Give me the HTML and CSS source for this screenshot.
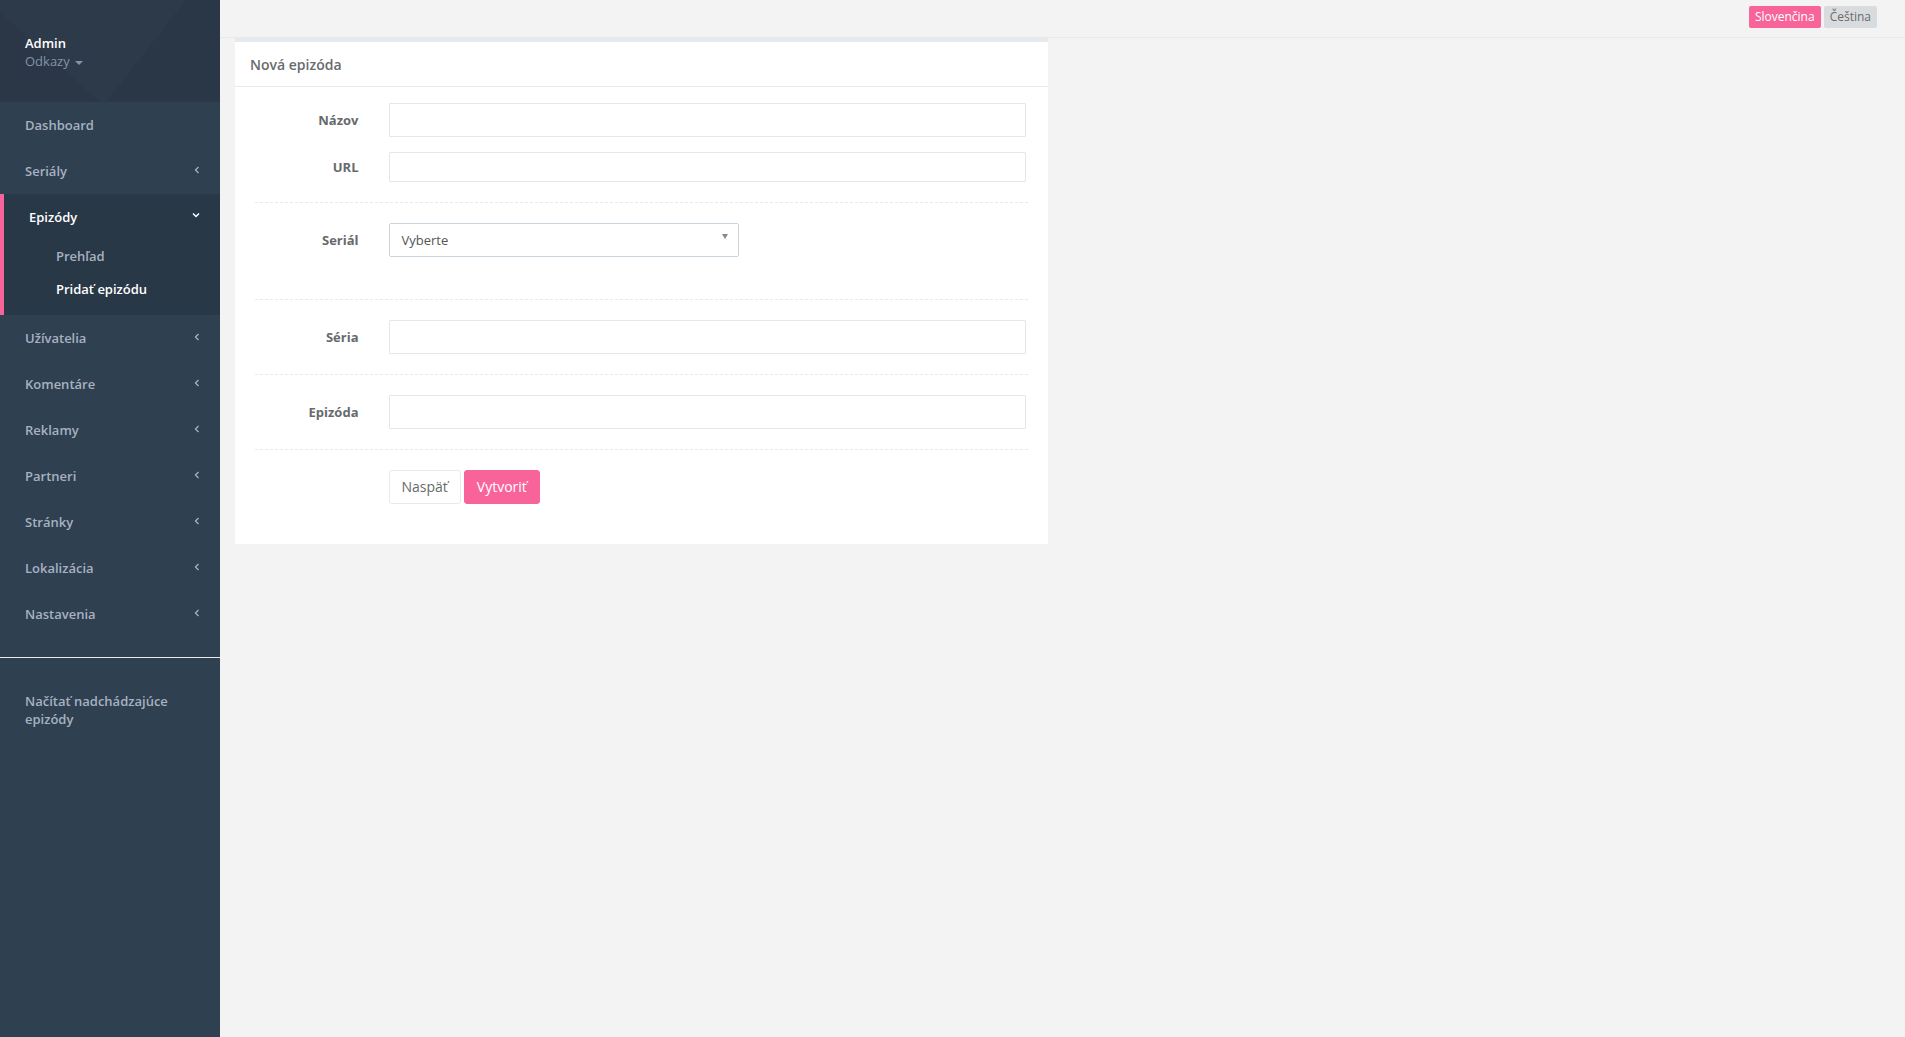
FILE: index.html
```html
<!DOCTYPE html>
<html lang="sk">
<head>
<meta charset="utf-8">
<title>Nová epizóda</title>
<link rel="stylesheet" href="styles.css">
</head>
<body>
<div class="layout">
  <nav class="sidebar">
    <div class="nav-header">
      <div class="profile-name">Admin</div>
      <div class="profile-links">Odkazy <span class="caret"></span></div>
    </div>
    <ul class="menu">
      <li><a class="menu-link">Dashboard</a></li>
      <li><a class="menu-link">Seriály <svg class="arrow" viewBox="0 0 6 8" width="6" height="8"><path d="M4.5 1 L1.5 4 L4.5 7" fill="none" stroke="currentColor" stroke-width="1.3"/></svg></a></li>
      <li class="active">
        <a class="menu-link">Epizódy <svg class="arrow-down" viewBox="0 0 8 6" width="8" height="6"><path d="M1 1.5 L4 4.5 L7 1.5" fill="none" stroke="currentColor" stroke-width="1.5"/></svg></a>
        <ul class="submenu">
          <li><a class="sub-link">Prehľad</a></li>
          <li class="current"><a class="sub-link">Pridať epizódu</a></li>
        </ul>
      </li>
      <li><a class="menu-link">Užívatelia <svg class="arrow" viewBox="0 0 6 8" width="6" height="8"><path d="M4.5 1 L1.5 4 L4.5 7" fill="none" stroke="currentColor" stroke-width="1.3"/></svg></a></li>
      <li><a class="menu-link">Komentáre <svg class="arrow" viewBox="0 0 6 8" width="6" height="8"><path d="M4.5 1 L1.5 4 L4.5 7" fill="none" stroke="currentColor" stroke-width="1.3"/></svg></a></li>
      <li><a class="menu-link">Reklamy <svg class="arrow" viewBox="0 0 6 8" width="6" height="8"><path d="M4.5 1 L1.5 4 L4.5 7" fill="none" stroke="currentColor" stroke-width="1.3"/></svg></a></li>
      <li><a class="menu-link">Partneri <svg class="arrow" viewBox="0 0 6 8" width="6" height="8"><path d="M4.5 1 L1.5 4 L4.5 7" fill="none" stroke="currentColor" stroke-width="1.3"/></svg></a></li>
      <li><a class="menu-link">Stránky <svg class="arrow" viewBox="0 0 6 8" width="6" height="8"><path d="M4.5 1 L1.5 4 L4.5 7" fill="none" stroke="currentColor" stroke-width="1.3"/></svg></a></li>
      <li><a class="menu-link">Lokalizácia <svg class="arrow" viewBox="0 0 6 8" width="6" height="8"><path d="M4.5 1 L1.5 4 L4.5 7" fill="none" stroke="currentColor" stroke-width="1.3"/></svg></a></li>
      <li><a class="menu-link">Nastavenia <svg class="arrow" viewBox="0 0 6 8" width="6" height="8"><path d="M4.5 1 L1.5 4 L4.5 7" fill="none" stroke="currentColor" stroke-width="1.3"/></svg></a></li>
    </ul>
    <div class="sidebar-divider"></div>
    <a class="upcoming">Načítať nadchádzajúce epizódy</a>
  </nav>

  <div class="main">
    <header class="topbar">
      <span class="lang lang-active">Slovenčina</span>
      <span class="lang">Čeština</span>
    </header>
    <div class="content">
      <div class="ibox">
        <div class="ibox-title">Nová epizóda</div>
        <div class="ibox-content">
          <form class="form">
            <div class="form-row">
              <label class="form-label">Názov</label>
              <input class="input" type="text">
            </div>
            <div class="form-row">
              <label class="form-label">URL</label>
              <input class="input input-sm" type="text">
            </div>
            <div class="hr-dashed"></div>
            <div class="form-row form-row-select">
              <label class="form-label">Seriál</label>
              <div class="select">
                <span class="select-text">Vyberte</span>
                <span class="select-arrow"></span>
              </div>
            </div>
            <div class="hr-dashed"></div>
            <div class="form-row">
              <label class="form-label">Séria</label>
              <input class="input" type="text">
            </div>
            <div class="hr-dashed"></div>
            <div class="form-row">
              <label class="form-label">Epizóda</label>
              <input class="input" type="text">
            </div>
            <div class="hr-dashed"></div>
            <div class="form-actions">
              <button type="button" class="btn btn-white">Naspäť</button>
              <button type="button" class="btn btn-primary">Vytvoriť</button>
            </div>
          </form>
        </div>
      </div>
      <div></div>
    </div>
  </div>
</div>
</body>
</html>
```

FILE: styles.css
```css
* { box-sizing: border-box; }

html, body {
  margin: 0;
  padding: 0;
  height: 100%;
}

body {
  font-family: "Open Sans", "Liberation Sans", sans-serif;
  font-size: 13px;
  color: #676a6c;
  background: #f3f3f4;
}

.layout {
  display: flex;
  min-height: 100vh;
}

/* Sidebar */
.sidebar {
  width: 220px;
  flex: 0 0 220px;
  background: #2f4050;
  min-height: 100vh;
}

.nav-header {
  height: 102px;
  padding: 34px 25px 32px;
  background:
    linear-gradient(128deg, rgba(255,255,255,0) 0 62%, rgba(0,0,0,0.06) 62% 100%),
    linear-gradient(42deg, rgba(0,0,0,0.05) 0 30%, rgba(255,255,255,0) 30% 100%),
    #2d3a4a;
  line-height: 18px;
}

.profile-name {
  color: #ffffff;
  font-weight: 600;
  font-size: 13px;
}

.profile-links {
  color: #8095a8;
  font-size: 13px;
}

.caret {
  display: inline-block;
  width: 0;
  height: 0;
  margin-left: 2px;
  vertical-align: middle;
  border-top: 4px solid #8095a8;
  border-left: 4px solid transparent;
  border-right: 4px solid transparent;
}

.menu {
  list-style: none;
  margin: 0;
  padding: 0;
}

.menu-link {
  display: flex;
  align-items: center;
  justify-content: space-between;
  padding: 14px 20px 14px 25px;
  line-height: 18px;
  font-weight: 600;
  color: #a7b1c2;
}

.arrow {
  margin-top: -3px;
  color: #a7b1c2;
}

.active {
  background: #293846;
  border-left: 4px solid #f8649a;
  padding-bottom: 10px;
}

.active > .menu-link {
  color: #ffffff;
}

.arrow-down {
  margin-top: -4px;
  color: #ffffff;
}

.submenu {
  list-style: none;
  margin: 0;
  padding: 0;
}

.sub-link {
  display: block;
  padding: 7px 10px 7px 52px;
  line-height: 18.5px;
  font-weight: 600;
  color: #a7b1c2;
}

.current .sub-link {
  color: #ffffff;
}

.sidebar-divider {
  margin-top: 20px;
  height: 1px;
  background: #e7eaec;
}

.upcoming {
  display: block;
  padding: 34px 20px 14px 25px;
  line-height: 18px;
  font-weight: 600;
  color: #a7b1c2;
}

/* Main */
.main {
  flex: 1;
  min-width: 0;
  background: #f3f3f4;
}

.topbar {
  height: 38px;
  border-bottom: 1px solid #e7eaec;
  display: flex;
  justify-content: flex-end;
  align-items: flex-start;
  gap: 3px;
  padding: 6px 28px 0 0;
}

.lang {
  display: inline-block;
  height: 22px;
  line-height: 22px;
  padding: 0 6px;
  font-size: 12px;
  border-radius: 2px;
  background: #d9dcde;
  color: #6b6b6b;
}

.lang-active {
  background: #f8649a;
  color: #ffffff;
}

.content {
  display: grid;
  grid-template-columns: 1fr 1fr;
  column-gap: 30px;
  padding: 0 15px;
}

.ibox {
  background: #ffffff;
  border-top: 4px solid #e7eaec;
}

.ibox-title {
  padding: 13px 15px 11px;
  line-height: 20px;
  font-size: 14px;
  font-weight: 600;
  color: #676a6c;
  border-bottom: 1px solid #e7eaec;
}

.ibox-content {
  padding: 16px 20px 21px;
}

.form-row {
  display: flex;
  align-items: center;
  gap: 30px;
  margin-bottom: 15px;
}

.form-row-select {
  margin-bottom: 42px;
}

.form-label {
  width: 103.5px;
  flex: 0 0 103.5px;
  text-align: right;
  font-weight: 700;
  font-size: 13px;
  color: #676a6c;
}

.input {
  flex: 1;
  min-width: 0;
  height: 34px;
  margin-right: 2px;
  border: 1px solid #e5e6e7;
  border-radius: 1px;
  background: #ffffff;
  padding: 6px 12px;
  font-family: inherit;
  font-size: 14px;
  color: #676a6c;
}

.input-sm {
  height: 30px;
}

.select {
  position: relative;
  width: 350px;
  height: 34px;
  border: 1px solid #cbd5dd;
  border-radius: 2px;
  background: #ffffff;
  padding: 0 12px;
  line-height: 32px;
  font-size: 13px;
  color: #555555;
}

.select-arrow {
  position: absolute;
  right: 10px;
  top: 10px;
  width: 0;
  height: 0;
  border-top: 5px solid #888888;
  border-left: 3px solid transparent;
  border-right: 3px solid transparent;
}

.hr-dashed {
  height: 1px;
  border-top: 1px dashed #e7eaec;
  margin: 20px 0;
}

.form-actions {
  display: flex;
  gap: 3px;
  padding-left: 133.5px;
  margin-bottom: 19px;
}

.btn {
  height: 34px;
  padding: 6px 12px;
  font-family: inherit;
  font-size: 14px;
  line-height: 20px;
  border-radius: 3px;
  cursor: pointer;
}

.btn-white {
  background: #ffffff;
  border: 1px solid #e7eaec;
  color: #676a6c;
}

.btn-primary {
  background: #f8649a;
  border: 1px solid #f8649a;
  color: #ffffff;
}
```
